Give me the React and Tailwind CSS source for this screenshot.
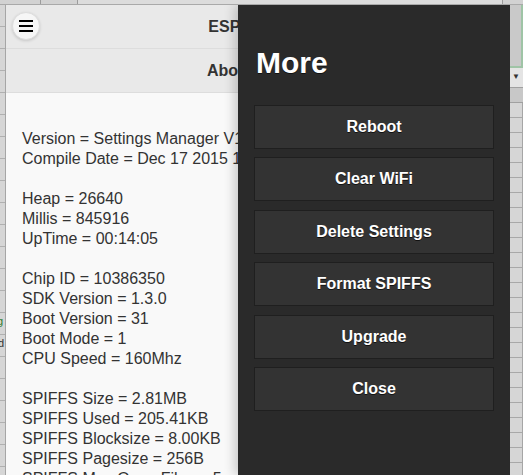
import React from 'react';

const info = [
  'Version = Settings Manager V1.0',
  'Compile Date = Dec 17 2015 12:47:31',
  '',
  'Heap = 26640',
  'Millis = 845916',
  'UpTime = 00:14:05',
  '',
  'Chip ID = 10386350',
  'SDK Version = 1.3.0',
  'Boot Version = 31',
  'Boot Mode = 1',
  'CPU Speed = 160Mhz',
  '',
  'SPIFFS Size = 2.81MB',
  'SPIFFS Used = 205.41KB',
  'SPIFFS Blocksize = 8.00KB',
  'SPIFFS Pagesize = 256B',
  'SPIFFS Max Open Files = 5',
  'SPIFFS Max Path Length = 32',
];

const actions = ['Reboot', 'Clear WiFi', 'Delete Settings', 'Format SPIFFS', 'Upgrade', 'Close'];

const App = () => {
  return (
    <div className="w-[523px] h-[475px] overflow-hidden flex flex-col bg-[#d2d2d2] font-['Liberation_Sans',Arial,sans-serif]">
      {/* desktop strip behind the window */}
      <div className="h-[5px] flex border-b border-[#a9a9a9]">
        <div className="w-[41px] border-r border-[#9c9c9c]" />
        <div className="w-[37px] border-r border-[#9c9c9c]" />
        <div className="flex-1 bg-[#dcdcdc] border-r border-[#9c9c9c]" />
        <div className="w-[20px]" />
      </div>

      <div className="flex flex-1 min-h-0">
        {/* spreadsheet edge, left */}
        <div className="w-[6px] relative bg-[#d6d6d6] border-r border-[#a6a6a6] bg-[repeating-linear-gradient(to_bottom,transparent_0,transparent_21px,#b0b0b0_21px,#b0b0b0_22px)]">
          <span className="absolute top-[311px] left-[-3px] text-[11px] leading-none text-[#2d7a2d]">g</span>
          <span className="absolute top-[333px] left-[-2px] text-[11px] leading-none text-[#333]">d</span>
        </div>

        {/* app window */}
        <div className="w-[504px] relative overflow-hidden bg-[#f9f9f9]">
          <div className="h-[44px] relative flex items-center justify-center bg-[#e9e9e9] border-b border-[#dddddd]">
            <button className="absolute left-[6px] top-[7px] w-[28px] h-[28px] rounded-full bg-[#f6f6f6] border border-[#dddddd] shadow-[0_1px_3px_rgba(0,0,0,0.15)] flex flex-col items-center justify-center gap-[3px]">
              <span className="block w-[14px] h-[2px] bg-black" />
              <span className="block w-[14px] h-[2px] bg-black" />
              <span className="block w-[14px] h-[2px] bg-black" />
            </button>
            <h1 className="text-[16px] font-bold text-[#333]">ESP Settings</h1>
          </div>
          <div className="h-[44px] flex items-center justify-center bg-[#e9e9e9] border-b border-[#dddddd]">
            <h2 className="text-[16px] font-bold text-[#333]">About Device</h2>
          </div>

          <div className="pt-[36px] pl-[16px] text-[16px] leading-[20px] text-[#333]">
            {info.map((line, i) => (
              <div key={i} className="h-[20px] whitespace-nowrap">{line}</div>
            ))}
          </div>

          {/* slide-out panel */}
          <div className="absolute top-0 right-0 bottom-0 w-[272px] bg-[#2a2a2a] px-[16px] pt-[40px] shadow-[-4px_0_10px_rgba(0,0,0,0.18)]">
            <h1 className="text-[30px] leading-[36px] font-bold text-white mb-[24px] pl-[2px] [text-shadow:0_1px_0_#111]">More</h1>
            <div className="flex flex-col gap-[8.4px]">
              {actions.map((label) => (
                <button
                  key={label}
                  className="h-[44px] w-full bg-[#333333] border border-[#1f1f1f] text-white text-[16px] font-bold [text-shadow:0_1px_0_#111]"
                >
                  {label}
                </button>
              ))}
            </div>
          </div>
        </div>

        {/* spreadsheet edge, right */}
        <div className="w-[13px] flex flex-col">
          <div className="h-[63px] bg-[#c9c9c9] border-r-2 border-b-2 border-[#9fc4a6]" />
          <div className="h-[20px] relative bg-[#e4e4e4] border-b border-[#a0a0a0]">
            <span className="absolute left-[2px] top-[5px] text-[8px] leading-none text-[#333]">▼</span>
          </div>
          <div className="h-[15px] bg-[#c8c8c8] border-b border-[#a0a0a0]" />
          <div className="flex-1 bg-[#d6d6d6] border-r border-[#a6a6a6] bg-[repeating-linear-gradient(to_bottom,transparent_0,transparent_14px,#a8a8a8_14px,#a8a8a8_15px)]" />
        </div>
      </div>
    </div>
  );
};

export default App;
